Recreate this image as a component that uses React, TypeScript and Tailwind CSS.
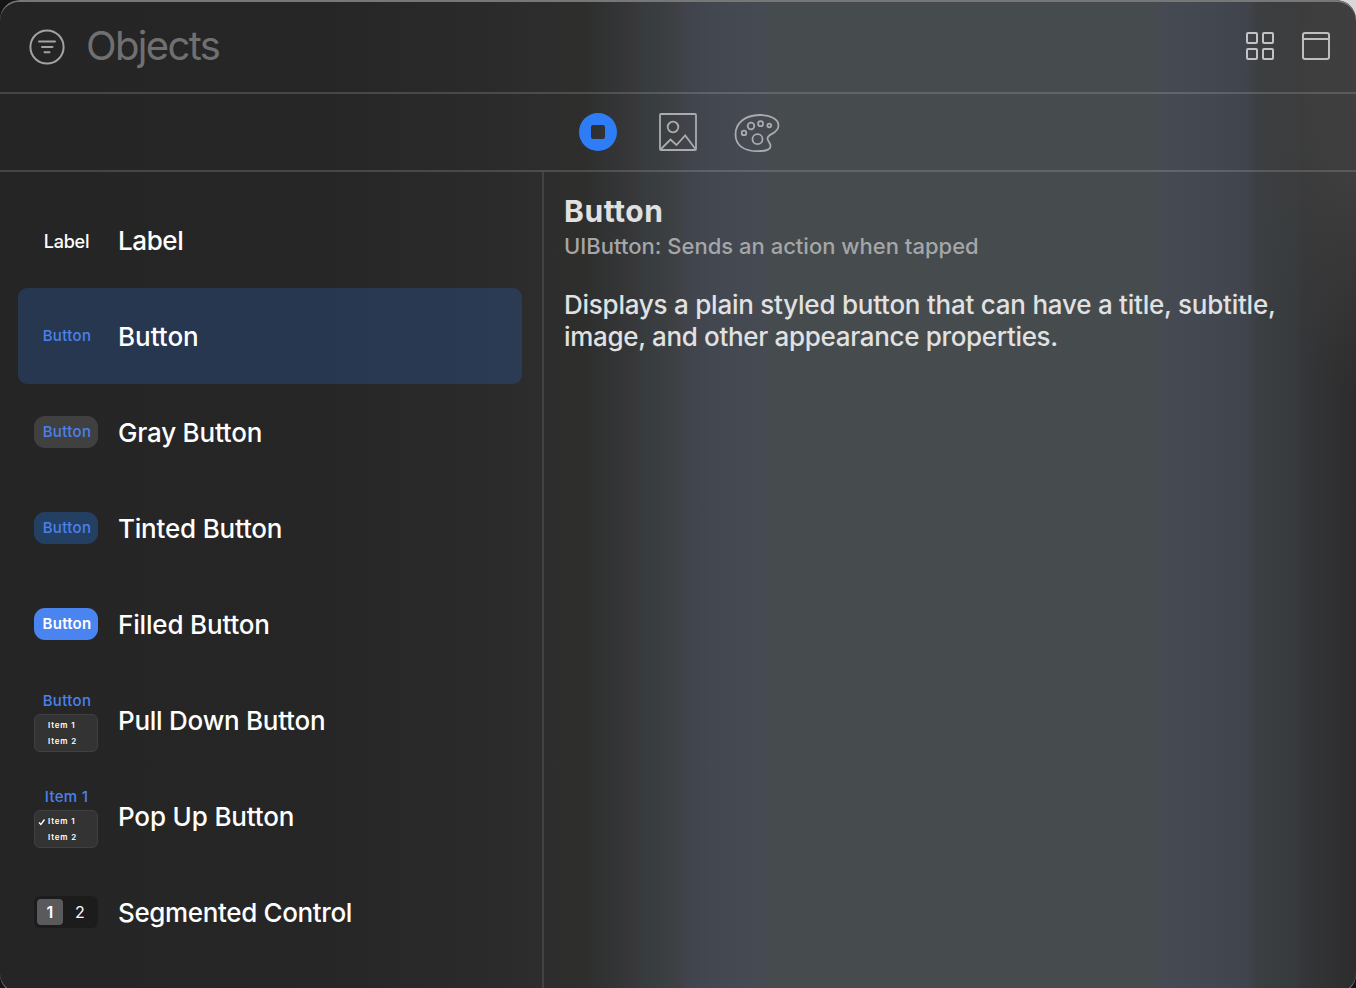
import React from "react";

const BACKDROP =
  "bg-[radial-gradient(ellipse_115px_330px_at_1356px_60px,#3f3f3f_0%,#3f3f3fee_35%,#3f3f3f00_100%),linear-gradient(90deg,#252525_0px,#262626_330px,#2b2b2b_500px,#2c2d2c_543px,#2e2e2d_585px,#313233_605px,#38383a_637px,#363b3e_640px,#3f4143_680px,#40434c_683px,#424750_710px,#464a53_765px,#464b4d_769px,#464b4d_1154px,#464a53_1158px,#424750_1215px,#40434c_1250px,#3c3f42_1256px,#363a3d_1298px,#353639_1301px,#2c2c2c_1356px)]";

function MiniMenu({ title, checked }: { title: string; checked?: boolean }) {
  return (
    <div className="flex h-16 w-16 flex-col items-center pt-1">
      <div className={checked ? "h-[22px] pl-px text-[15px] font-medium leading-[18px] tracking-[0.3px] text-[#4a82ee]" : "h-[22px] pl-0.5 text-[15px] font-medium leading-[18px] tracking-[0.35px] text-[#4a82ee]"}>{title}</div>
      <div className="relative h-[38px] w-16 shrink-0 rounded-[6px] border border-[#404040] bg-[#333333] pl-[13px] pt-[2px] text-[8px] font-semibold leading-4 tracking-[0.85px] text-white">
        {checked && (
          <svg className="absolute left-[3px] top-[7px]" width="8" height="8" viewBox="0 0 8 8" fill="none" stroke="#fff" strokeWidth="1.3">
            <path d="M1 4.500 2.900 6.500 6.500 1.500" />
          </svg>
        )}
        <div>Item 1</div>
        <div>Item 2</div>
      </div>
    </div>
  );
}

const pill = "flex h-8 w-16 items-center justify-center rounded-[11px] pl-0.5 text-[15px]";

const items: { name: string; tracking: string; preview: React.ReactNode }[] = [
  { name: "Label", tracking: "tracking-[-0.4px]", preview: <span className="pl-px pt-0.5 text-[18px] font-medium tracking-[-0.2px] text-white">Label</span> },
  { name: "Button", tracking: "tracking-[-0.01px]", preview: <div className={pill + " font-medium tracking-[0.35px] text-[#4a82ee]"}>Button</div> },
  { name: "Gray Button", tracking: "tracking-[-0.2px]", preview: <div className={pill + " bg-[#404040] font-medium tracking-[0.35px] text-[#4a82ee]"}>Button</div> },
  { name: "Tinted Button", tracking: "tracking-[-0.2px]", preview: <div className={pill + " bg-[#233f61] font-medium tracking-[0.35px] text-[#4a82ee]"}>Button</div> },
  { name: "Filled Button", tracking: "tracking-[-0.17px]", preview: <div className={pill + " bg-[#4a84f0] font-semibold tracking-[0.25px] text-white"}>Button</div> },
  { name: "Pull Down Button", tracking: "tracking-[-0.25px]", preview: <MiniMenu title="Button" /> },
  { name: "Pop Up Button", tracking: "tracking-[-0.15px]", preview: <MiniMenu title="Item 1" checked /> },
  {
    name: "Segmented Control",
    tracking: "tracking-[-0.36px]",
    preview: (
      <div className="flex h-8 w-16 items-center rounded-[6px] bg-[#1c1c1c] pl-[3px] text-[16px] text-white">
        <span className="flex h-[26px] w-[26px] items-center justify-center rounded-[4px] bg-[#5a5a5c] font-semibold">1</span>
        <span className="flex h-[26px] w-[34px] items-center justify-center">2</span>
      </div>
    ),
  },
];

export default function App() {
  return (
    <div className="h-[988px] w-[1356px] overflow-hidden bg-[linear-gradient(180deg,#00000000_0px,#00000000_500px,#151515_501px),linear-gradient(90deg,#151515_0px,#151515_1000px,#d8d8d8_1001px)] font-['Inter','Liberation_Sans',sans-serif]">
      <div className={"relative flex h-[994px] flex-col overflow-hidden rounded-[20px] " + BACKDROP}>
        <header className="flex h-[94px] shrink-0 items-center border-b-2 border-white/15 pl-[29px] pr-[25px]">
          <svg className="mt-0.5" width="36" height="36" viewBox="0 0 36 36" fill="none" stroke="#a3a3a3" strokeWidth="2" strokeLinecap="round">
            <circle cx="18" cy="18" r="16.600" />
            <path d="M10 12.500h16M13 18h10.500M15.500 23.300h5" />
          </svg>
          <span className="ml-[21px] text-[40px] font-normal leading-[48px] tracking-[-1.65px] text-[#707070]">Objects</span>
          <svg className="ml-auto" width="30" height="30" viewBox="0 0 30 30" fill="none" stroke="#c0c2c5" strokeWidth="2">
            <rect x="2" y="2" width="10" height="10" rx="1" />
            <rect x="18" y="2" width="10" height="10" rx="1" />
            <rect x="2" y="18" width="10" height="10" rx="1" />
            <rect x="18" y="18" width="10" height="10" rx="1" />
          </svg>
          <svg className="ml-[26px]" width="30" height="30" viewBox="0 0 30 30" fill="none" stroke="#bebebe" strokeWidth="2">
            <rect x="2" y="2" width="26" height="26" rx="2" />
            <path d="M2 8h26" />
          </svg>
        </header>

        <nav className="flex h-[78px] shrink-0 items-center border-b-2 border-white/15 pl-[579px]">
          <svg width="38" height="38" viewBox="0 0 38 38">
            <path fillRule="evenodd" fill="#2f7df6" d="M19 0a19 19 0 1 0 0 38a19 19 0 0 0 0-38ZM14 12h10a2 2 0 0 1 2 2v10a2 2 0 0 1-2 2H14a2 2 0 0 1-2-2V14a2 2 0 0 1 2-2Z" />
          </svg>
          <svg className="ml-[42px]" width="38" height="38" viewBox="0 0 38 38" fill="none" stroke="#ababad" strokeWidth="1.8">
            <rect x="1" y="1" width="36" height="36" rx="1" />
            <circle cx="14" cy="14" r="5.300" />
            <path d="M1.500 36.500 11.500 26.500 17.500 32 26.200 22.500 36.800 36.500" />
          </svg>
          <svg className="ml-[37px] mt-0.5" width="46" height="40" viewBox="0 0 46 40" fill="none" stroke="#ababad" strokeWidth="1.8">
            <path d="M25.500 2C36 1.800 44.500 6 44.500 12.500C44.500 21 33.500 20.500 33.500 25.500C33.500 28.500 37 30 36.500 33.500C36 37 30 38.200 23.500 38.200C9 38.200 1.500 31.500 1.500 21.500C1.500 10 11 2.200 25.500 2Z" />
            <circle cx="10" cy="19.900" r="2.300" />
            <circle cx="17" cy="13" r="3.300" />
            <circle cx="26.600" cy="10.700" r="2.500" />
            <circle cx="35.300" cy="12.500" r="1.900" />
            <circle cx="23.500" cy="26.200" r="5" />
          </svg>
        </nav>

        <main className="flex min-h-0 flex-1">
          <aside className="w-[544px] shrink-0 border-r-2 border-white/10 pl-[18px] pr-5 pt-5">
            {items.map((it, i) => (
              <div key={it.name} className={"flex h-24 items-center rounded-[9px] pl-4 " + (i === 1 ? "bg-[#2c5aa0]/35" : "")}>
                <div className="flex w-16 shrink-0 items-center justify-center">{it.preview}</div>
                <span className={"ml-5 whitespace-nowrap pt-0.5 text-[26px] font-medium leading-8 text-white " + it.tracking}>{it.name}</span>
              </div>
            ))}
          </aside>
          <section className="flex-1 pl-5 pt-[19px]">
            <h1 className="text-[30px] font-bold leading-10 tracking-[0.55px] text-[#e0e0e0]">Button</h1>
            <p className="whitespace-nowrap text-[22px] font-medium leading-[30px] tracking-[0.01px] text-[#a5a6a8]">UIButton: Sends an action when tapped</p>
            <p className="mt-7 whitespace-nowrap text-[26px] font-medium leading-8 tracking-[-0.24px] text-[#e0e1e2]">
              Displays a plain styled button that can have a title, subtitle,
              <br />
              <span className="tracking-[-0.33px]">image, and other appearance properties.</span>
            </p>
          </section>
        </main>
        <div className="pointer-events-none absolute -inset-x-0.5 bottom-0 top-0 rounded-[21px] border-2 border-[#777777]" />
      </div>
    </div>
  );
}
